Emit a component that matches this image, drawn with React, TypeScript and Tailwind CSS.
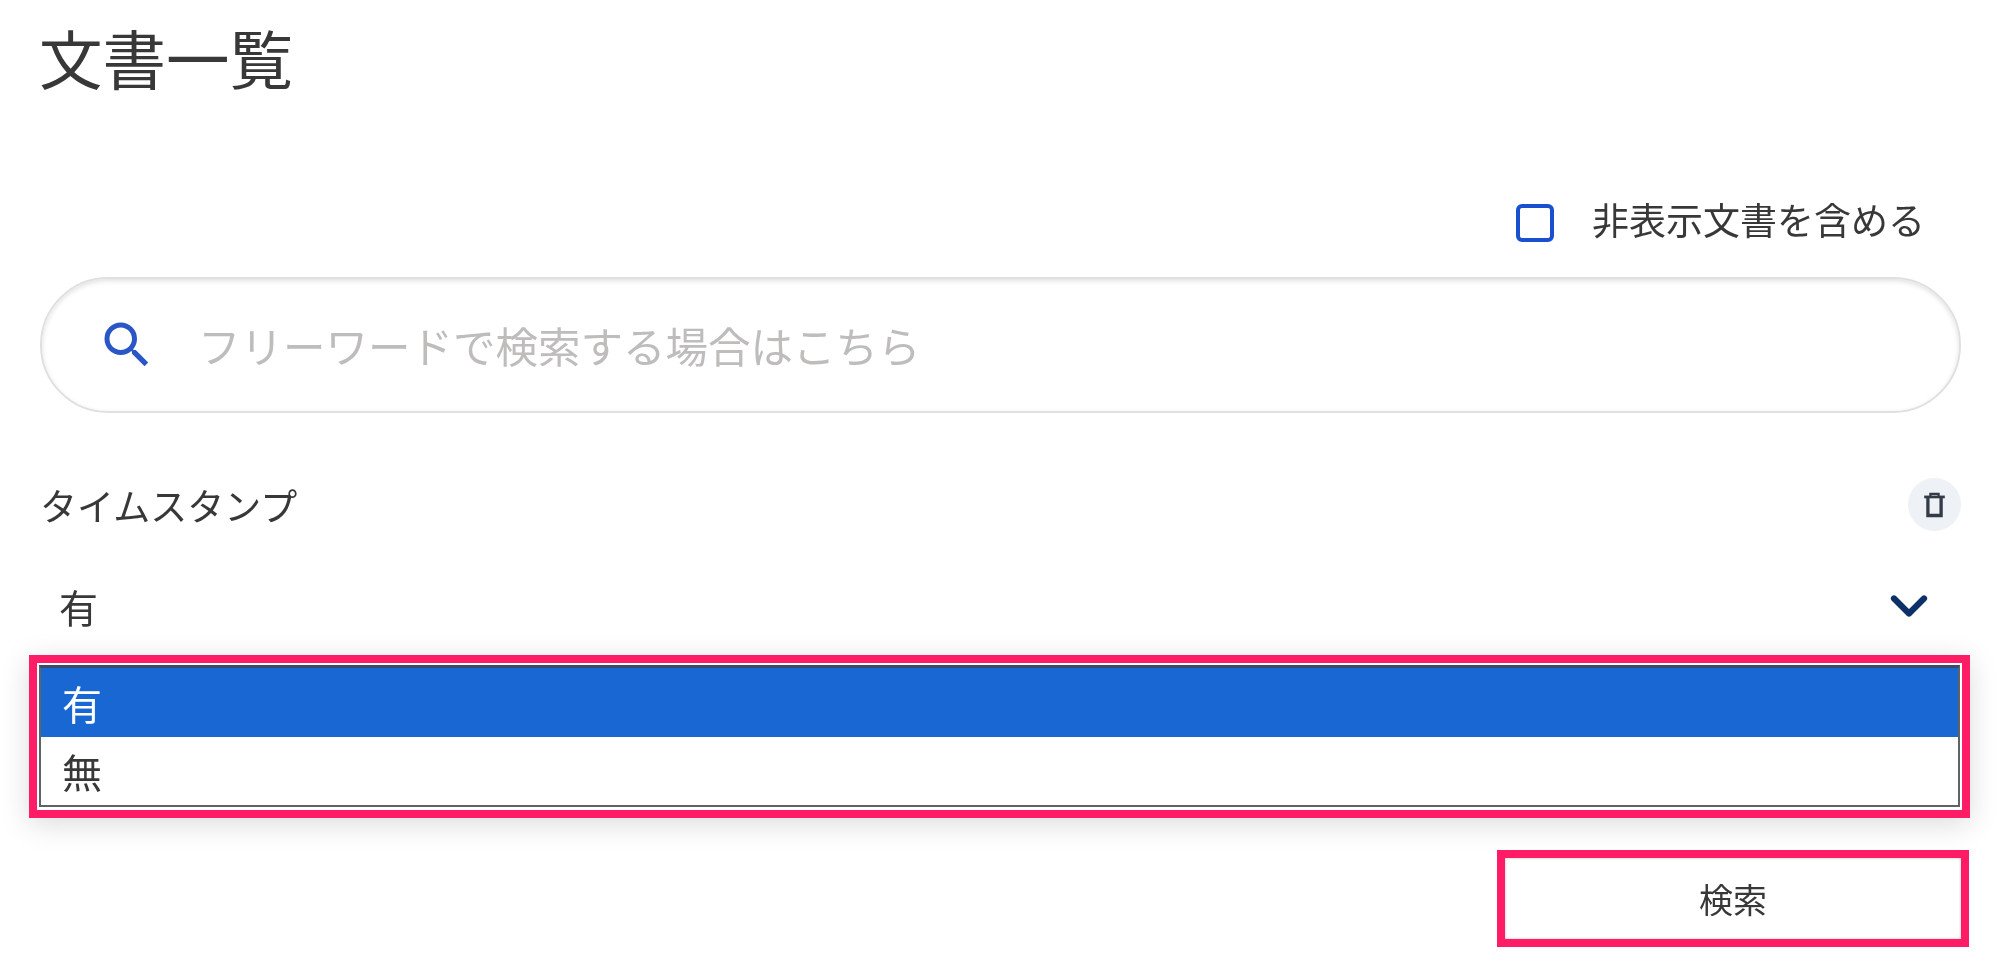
import { ChevronDown } from "lucide-react"

const font = "font-['Noto_Sans_CJK_JP','Noto_Sans',sans-serif]"

function SearchIcon() {
  return (
    <svg viewBox="0 0 24 24" className="size-[60px] text-[#2a56c6]" fill="currentColor" aria-hidden="true">
      <path d="M15.5 14h-.79l-.28-.27A6.471 6.471 0 0 0 16 9.5 6.5 6.5 0 1 0 9.5 16c1.61 0 3.09-.59 4.23-1.57l.27.28v.79l5 4.99L20.49 19l-4.99-5zm-6 0C7.01 14 5 11.99 5 9.5S7.01 5 9.5 5 14 7.01 14 9.5 11.99 14 9.5 14z" />
    </svg>
  )
}

function TrashIcon() {
  return (
    <svg viewBox="0 0 24 24" className="size-[33px] text-[#333b47]" fill="none" stroke="currentColor" aria-hidden="true">
      <path d="M4.5 6.5h15" strokeWidth="2" />
      <path d="M9 6V4.2h6V6" strokeWidth="1.6" />
      <path d="M7.2 7v13h9.6V7" strokeWidth="2.4" />
    </svg>
  )
}

export default function App() {
  return (
    <main className={`${font} h-[969px] w-[1999px] overflow-hidden bg-white px-[41px] text-[#383838] blur-[0.6px]`}>
      <h1 className="-ml-[2px] pt-[16px] text-[63.5px] leading-[80px] font-normal">文書一覧</h1>

      <div className="mt-[103px] flex items-center justify-end pr-[33px]">
        <span className="mt-[5px] size-[38px] rounded-[6px] border-[4px] border-[#1a4fd0] bg-white" />
        <span className="mb-[4px] ml-[38px] text-[37px] leading-[36px]">非表示文書を含める</span>
      </div>

      <div className="-ml-[1px] mt-[35px] flex h-[136px] w-[1921px] items-center rounded-full border-2 border-[#e0e0e0] bg-white pl-[55px] shadow-[inset_0_2px_5px_rgba(0,0,0,0.12)]">
        <SearchIcon />
        <span className="ml-[41px] text-[42.5px] leading-none text-[#bfbcbc]">フリーワードで検索する場合はこちら</span>
      </div>

      <div className="mt-[65px] flex items-center justify-between">
        <span className="-ml-[1px] text-[37px] leading-[52px]">タイムスタンプ</span>
        <span className="-mr-[3px] flex size-[53px] items-center justify-center rounded-full bg-[#eef1f6]">
          <TrashIcon />
        </span>
      </div>

      <div className="mt-[47px] flex h-[56px] items-center justify-between pl-[18px] pr-[19px]">
        <span className="text-[39px] leading-none">有</span>
        <ChevronDown className="size-[60px] text-[#0d3068]" strokeWidth={2.5} aria-hidden="true" />
      </div>

      <div className="-mx-[12px] mt-[21px] h-[163px] w-[1941px] border-[8px] border-[#ff1c66] bg-white p-[2px] pb-[4px] shadow-[0_6px_28px_rgba(0,0,0,0.14)]">
        <div className="border-2 border-t-[3px] border-[#5f6368] border-t-[#3b4a66] text-[40px] leading-none">
          <div className="flex h-[69px] items-center bg-[#1967d2] pl-[21px] text-white">有</div>
          <div className="flex h-[68px] items-center bg-white pl-[21px] text-[#383838]">無</div>
        </div>
      </div>

      <div className="mt-[32px] flex justify-end">
        <button
          type="button"
          className="-mr-[11px] flex h-[97px] w-[472px] items-center justify-center border-[8px] border-[#ff1c66] bg-white text-[34px] leading-none text-[#383838] shadow-[inset_0_0_3px_rgba(0,0,0,0.25)]"
        >
          検索
        </button>
      </div>
    </main>
  )
}
